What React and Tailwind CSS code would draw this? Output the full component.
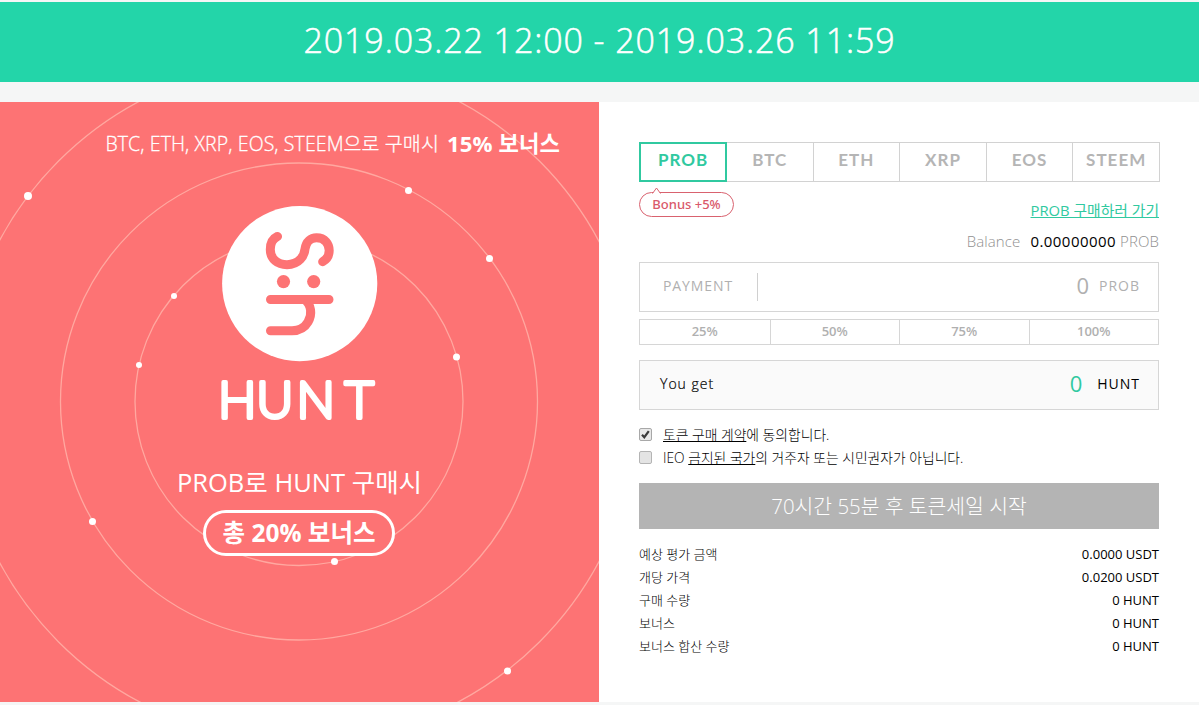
import React, { useState } from "react";

const coins = ["PROB", "BTC", "ETH", "XRP", "EOS", "STEEM"];
const percents = ["25%", "50%", "75%", "100%"];

const summary = [
  { label: "예상 평가 금액", value: "0.0000 USDT" },
  { label: "개당 가격", value: "0.0200 USDT" },
  { label: "구매 수량", value: "0 HUNT" },
  { label: "보너스", value: "0 HUNT" },
  { label: "보너스 합산 수량", value: "0 HUNT" },
];

const orbits = [164, 238.5, 340];
const dots = [
  [28, 94, 4],
  [408.5, 88.5, 3.5],
  [489.5, 156.5, 3.5],
  [174, 194, 3],
  [456.5, 255, 3.5],
  [139, 263, 3],
  [92.5, 419.5, 3.5],
  [334.5, 459.5, 3.5],
  [507.5, 569, 3.5],
];

const Orbits = () => (
  <svg className="absolute inset-0" width="599" height="600" viewBox="0 0 599 600">
    {orbits.map((r) => (
      <circle key={r} cx="299" cy="299.5" r={r} fill="none" stroke="#ffa8a0" strokeWidth="1.3" />
    ))}
    {dots.map(([x, y, r]) => (
      <circle key={x} cx={x} cy={y} r={r} fill="#fff" />
    ))}
  </svg>
);

const HuntLogo = () => (
  <svg width="176" height="230" viewBox="-10 0 176 230">
    <circle cx="77.7" cy="77.6" r="77.6" fill="#fff" />
    <g fill="none" stroke="#fd7374" strokeWidth="9" strokeLinecap="round" strokeLinejoin="round">
      <path d="M55.5 30.4C50 33 48.3 39 48.3 43.5C48.3 53 55.5 58.7 65 58.7C77 58.7 82.3 50 83 43C84 35.5 89 31.7 94.5 31.7C103 31.7 107.2 38 107.2 44.5C107.2 50 104.5 53.5 100.7 55.7" />
      <path d="M48.5 93.5H107M82.5 93.5C89.5 99 90.5 108 86 116C82.5 122 77 124.7 70 124.7H48.5" />
    </g>
    <circle cx="61.5" cy="75.6" r="6.6" fill="#fd7374" />
    <circle cx="91.7" cy="75.6" r="6.6" fill="#fd7374" />
    <text
      x="-4 34.2 74.6 122.5"
      y="211.8"
      fontFamily="Lato, sans-serif"
      fontWeight="300"
      fontSize="51"
      fill="#fff"
      stroke="#fff"
      strokeWidth="3.8"
      strokeLinejoin="round"
    >
      HUNT
    </text>
  </svg>
);

const App = () => {
  const [coin, setCoin] = useState("PROB");

  return (
    <div className="h-[705px] w-[1199px] overflow-hidden bg-[#f5f6f6] pt-[2px] font-['Open_Sans','Noto_Sans_CJK_KR',sans-serif] text-black">
      <header className="flex h-20 items-center justify-center bg-[#23d5a9] pb-1 text-[34px] font-light tracking-[0.9px] text-white [-webkit-text-stroke:0.5px_white]">
        2019.03.22 12:00 - 2019.03.26 11:59
      </header>

      <main className="mt-5 flex h-[600px]">
        <section className="relative w-[599px] shrink-0 bg-[#fd7374] text-white">
          <Orbits />
          <div className="relative flex flex-col items-center">
            <p className="mt-6 flex h-9 w-full items-center justify-end gap-2 pr-[39px] text-[19.5px] font-light tracking-[0.1px]">
              <span className="[-webkit-text-stroke:0.3px_white]">BTC, ETH, XRP, EOS, STEEM으로 구매시</span>
              <b className="text-[22.2px] font-bold">15% 보너스</b>
            </p>
            <div className="mt-11 h-[218px]">
              <HuntLogo />
            </div>
            <p className="mt-[38px] h-10 text-[25.5px] leading-10">PROB로 HUNT 구매시</p>
            <p className="mt-2 mr-px flex h-[46px] w-[192px] items-center justify-center rounded-full border-3 border-white bg-[#fd7374] text-[24.5px] font-bold">
              총 20% 보너스
            </p>
          </div>
        </section>

        <section className="flex-1 bg-white pt-10 pr-10 pl-10">
          <div className="flex h-10 w-[521px]">
            {coins.map((c) => (
              <button
                key={c}
                onClick={() => setCoin(c)}
                className={
                  c === coin
                    ? "w-[88px] border-2 border-[#30c9a0] pb-1 font-['Lato',sans-serif] text-[17px] font-bold tracking-[1px] text-[#30c9a0]"
                    : "flex-1 border-y border-r border-[#d2d2d2] pb-1 font-['Lato',sans-serif] text-[17px] font-bold tracking-[1px] text-[#b5b5b5]"
                }
              >
                {c}
              </button>
            ))}
          </div>

          <div className="mt-2.5 flex h-[70px] w-[520px] justify-between">
            <div className="relative flex h-[25px] w-[95px] items-center justify-center rounded-full border border-[#d9626f] font-['Noto_Sans',sans-serif] text-[13px] font-medium text-[#d9596a]">
              <svg className="absolute -top-[6px] left-3" width="9" height="7" viewBox="0 0 9 7">
                <path d="M0.5 6.5L4.5 1L8.5 6.5" fill="#fff" stroke="#d9626f" />
              </svg>
              Bonus +5%
            </div>
            <div className="flex flex-col items-end">
              <a className="mt-[3px] h-[30px] text-[14.8px] leading-[30px] text-[#30c9a0] underline">PROB 구매하러 가기</a>
              <p className="mt-px flex h-[30px] items-center text-[15px] font-light tracking-[0.1px] text-[#909090]">
                Balance
                <span className="mr-1 ml-2.5 font-normal tracking-[0.45px] text-black">0.00000000</span>
                PROB
              </p>
            </div>
          </div>

          <div className="flex h-[50px] w-[520px] items-center border border-[#d6d6d6] pr-[18px] pb-[3px] pl-[23px] text-[#b0b0b0]">
            <span className="w-[94px] text-[14px] tracking-[0.9px]">PAYMENT</span>
            <span className="mt-[3px] h-7 w-px bg-[#d0d0d0]" />
            <span className="ml-auto text-[22px]">0</span>
            <span className="ml-2.5 text-[14px] tracking-[1px]">PROB</span>
          </div>

          <div className="mt-[7px] grid h-[26px] w-[520px] grid-cols-4 border border-[#d6d6d6] text-[13px] font-semibold text-[#b0b0b0]">
            {percents.map((p) => (
              <button key={p} className="flex items-center justify-center border-l border-[#d6d6d6] first:border-l-0">
                {p}
              </button>
            ))}
          </div>

          <div className="mt-[15px] flex h-[50px] w-[520px] items-center border border-[#d6d6d6] bg-[#fafafa] pr-[18px] pb-[3px] pl-5 text-[14px] tracking-[1px]">
            <span className="font-light [-webkit-text-stroke:0.2px_black]">You get</span>
            <span className="ml-auto text-[22px] font-medium text-[#30c9a0]">0</span>
            <span className="ml-3.5">HUNT</span>
          </div>

          <div className="mt-[13px] text-[13.8px] leading-[23px] font-light">
            <label className="flex h-[23px] items-center">
              <span className="mr-[11px] size-[13px] rounded-[2px] border border-[#a8a8a8] bg-[#e8e8e8]">
                <svg width="11" height="11" viewBox="0 0 11 11">
                  <path d="M2 5.7L4.3 8.2L8.8 2.2" fill="none" stroke="#3a3a3a" strokeWidth="2.2" />
                </svg>
              </span>
              <span>
                <u>토큰 구매 계약</u>에 동의합니다.
              </span>
            </label>
            <label className="flex h-[23px] items-center">
              <span className="mr-[11px] size-[13px] rounded-[2px] border border-[#b4b4b4] bg-[#e4e4e4]" />
              <span>
                IEO <u>금지된 국가</u>의 거주자 또는 시민권자가 아닙니다.
              </span>
            </label>
          </div>

          <button className="mt-[14px] flex h-[46px] w-[520px] items-center justify-center bg-[#b4b4b4] text-[20.4px] font-light text-white">
            70시간 55분 후 토큰세일 시작
          </button>

          <dl className="mt-[14px] w-[520px] text-[13px] leading-[23px]">
            {summary.map((row) => (
              <div key={row.label} className="flex h-[23px] justify-between">
                <dt className="font-light">{row.label}</dt>
                <dd>{row.value}</dd>
              </div>
            ))}
          </dl>
        </section>
      </main>
    </div>
  );
};

export default App;
